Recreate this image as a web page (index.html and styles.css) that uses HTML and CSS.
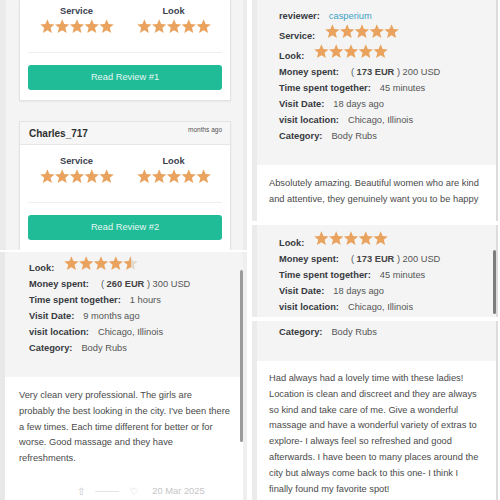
FILE: index.html
```html
<!DOCTYPE html>
<html>
<head>
<meta charset="utf-8">
<link rel="stylesheet" href="styles.css">
</head>
<body>
<svg class="defs" width="0" height="0" aria-hidden="true">
  <defs>
    <symbol id="star" viewBox="0 0 100 100">
      <polygon points="50,1 63.5,33.5 98.5,36 71.5,58.5 80.5,93.5 50,74.5 19.5,93.5 28.5,58.5 1.5,36 36.5,33.5"/>
    </symbol>
    <linearGradient id="halfFill" x1="0" x2="1" y1="0" y2="0">
      <stop offset="0.5" stop-color="#e9a35e"/>
      <stop offset="0.5" stop-color="#e3d9cb"/>
    </linearGradient>
  </defs>
</svg>

<div class="collage">
  <div class="col col-left">
    <section class="shot shot-a">
      <div class="card card-first">
        <div class="card-body">
          <div class="ratings">
            <div class="rating">
              <div class="rating-label">Service</div>
              <svg class="stars" viewBox="0 0 500 100"><use href="#star" x="0" width="100" height="100"/><use href="#star" x="100" width="100" height="100"/><use href="#star" x="200" width="100" height="100"/><use href="#star" x="300" width="100" height="100"/><use href="#star" x="400" width="100" height="100"/></svg>
            </div>
            <div class="rating">
              <div class="rating-label">Look</div>
              <svg class="stars" viewBox="0 0 500 100"><use href="#star" x="0" width="100" height="100"/><use href="#star" x="100" width="100" height="100"/><use href="#star" x="200" width="100" height="100"/><use href="#star" x="300" width="100" height="100"/><use href="#star" x="400" width="100" height="100"/></svg>
            </div>
          </div>
          <div class="divider"></div>
          <div class="btn">Read Review #1</div>
        </div>
      </div>
      <div class="card card-second">
        <div class="card-head">
          <span class="card-name">Charles_717</span>
          <span class="card-time">months ago</span>
        </div>
        <div class="card-body card-body-second">
          <div class="ratings">
            <div class="rating">
              <div class="rating-label">Service</div>
              <svg class="stars" viewBox="0 0 500 100"><use href="#star" x="0" width="100" height="100"/><use href="#star" x="100" width="100" height="100"/><use href="#star" x="200" width="100" height="100"/><use href="#star" x="300" width="100" height="100"/><use href="#star" x="400" width="100" height="100"/></svg>
            </div>
            <div class="rating">
              <div class="rating-label">Look</div>
              <svg class="stars" viewBox="0 0 500 100"><use href="#star" x="0" width="100" height="100"/><use href="#star" x="100" width="100" height="100"/><use href="#star" x="200" width="100" height="100"/><use href="#star" x="300" width="100" height="100"/><use href="#star" x="400" width="100" height="100"/></svg>
            </div>
          </div>
          <div class="divider"></div>
          <div class="btn">Read Review #2</div>
        </div>
      </div>
    </section>

    <section class="shot shot-b">
      <div class="details details-b">
        <div class="row row-stars"><span class="label">Look:</span><svg class="stars stars-inline" viewBox="0 0 500 100"><use href="#star" x="0" width="100" height="100"/><use href="#star" x="100" width="100" height="100"/><use href="#star" x="200" width="100" height="100"/><use href="#star" x="300" width="100" height="100"/><use href="#star" x="400" width="100" height="100" fill="url(#halfFill)"/></svg></div>
        <div class="row"><span class="label">Money spent:</span><span class="value value-money">( <b>260 EUR</b> ) 300 USD</span></div>
        <div class="row"><span class="label">Time spent together:</span><span class="value">1 hours</span></div>
        <div class="row"><span class="label">Visit Date:</span><span class="value">9 months ago</span></div>
        <div class="row"><span class="label">visit location:</span><span class="value">Chicago, Illinois</span></div>
        <div class="row"><span class="label">Category:</span><span class="value">Body Rubs</span></div>
      </div>
      <div class="review-text text-b">
        <p>Very clean very professional. The girls are<br>probably the best looking in the city. I've been there<br>a few times. Each time different for better or for<br>worse. Good massage and they have<br>refreshments.</p>
        <div class="review-foot">
          <span class="foot-icon">&#8679;</span>
          <span class="foot-line"></span>
          <span class="foot-icon">&#9825;</span>
          <span class="foot-date">20 Mar 2025</span>
        </div>
      </div>
      <div class="scroll-thumb thumb-b"></div>
    </section>
  </div>

  <div class="col col-right">
    <section class="shot shot-c">
      <div class="details details-c">
        <div class="row"><span class="label">reviewer:</span><span class="value value-link">casperium</span></div>
        <div class="row row-stars"><span class="label">Service:</span><svg class="stars stars-inline" viewBox="0 0 500 100"><use href="#star" x="0" width="100" height="100"/><use href="#star" x="100" width="100" height="100"/><use href="#star" x="200" width="100" height="100"/><use href="#star" x="300" width="100" height="100"/><use href="#star" x="400" width="100" height="100"/></svg></div>
        <div class="row row-stars"><span class="label">Look:</span><svg class="stars stars-inline" viewBox="0 0 500 100"><use href="#star" x="0" width="100" height="100"/><use href="#star" x="100" width="100" height="100"/><use href="#star" x="200" width="100" height="100"/><use href="#star" x="300" width="100" height="100"/><use href="#star" x="400" width="100" height="100"/></svg></div>
        <div class="row"><span class="label">Money spent:</span><span class="value value-money">( <b>173 EUR</b> ) 200 USD</span></div>
        <div class="row"><span class="label">Time spent together:</span><span class="value">45 minutes</span></div>
        <div class="row"><span class="label">Visit Date:</span><span class="value">18 days ago</span></div>
        <div class="row"><span class="label">visit location:</span><span class="value">Chicago, Illinois</span></div>
        <div class="row"><span class="label">Category:</span><span class="value">Body Rubs</span></div>
      </div>
      <div class="review-text text-c">
        <p>Absolutely amazing. Beautiful women who are kind<br>and attentive, they genuinely want you to be happy</p>
      </div>
    </section>

    <section class="shot shot-d">
      <div class="details details-d">
        <div class="row row-stars"><span class="label">Look:</span><svg class="stars stars-inline" viewBox="0 0 500 100"><use href="#star" x="0" width="100" height="100"/><use href="#star" x="100" width="100" height="100"/><use href="#star" x="200" width="100" height="100"/><use href="#star" x="300" width="100" height="100"/><use href="#star" x="400" width="100" height="100"/></svg></div>
        <div class="row"><span class="label">Money spent:</span><span class="value value-money">( <b>173 EUR</b> ) 200 USD</span></div>
        <div class="row"><span class="label">Time spent together:</span><span class="value">45 minutes</span></div>
        <div class="row"><span class="label">Visit Date:</span><span class="value">18 days ago</span></div>
        <div class="row"><span class="label">visit location:</span><span class="value">Chicago, Illinois</span></div>
      </div>
      <div class="scroll-thumb thumb-d"></div>
    </section>

    <section class="shot shot-e">
      <div class="details details-e">
        <div class="row"><span class="label">Category:</span><span class="value">Body Rubs</span></div>
      </div>
      <div class="review-text text-e">
        <p>Had always had a lovely time with these ladies!<br>Location is clean and discreet and they are always<br>so kind and take care of me. Give a wonderful<br>massage and have a wonderful variety of extras to<br>explore- I always feel so refreshed and good<br>afterwards. I have been to many places around the<br>city but always come back to this one- I think I<br>finally found my favorite spot!</p>
      </div>
    </section>
  </div>
</div>
</body>
</html>
```

FILE: styles.css
```css
* { box-sizing: border-box; }

html, body {
  margin: 0;
  padding: 0;
  background: #ffffff;
}

body {
  width: 500px;
  height: 500px;
  overflow: hidden;
  font-family: "Liberation Sans", Arial, Helvetica, sans-serif;
  font-size: 9.3px;
  color: #333;
}

.defs { position: absolute; width: 0; height: 0; }

.collage {
  display: flex;
  gap: 5px;
  width: 500px;
  height: 500px;
}

.col {
  display: flex;
  flex-direction: column;
}

.col-left { width: 247px; gap: 2px; }
.col-right { width: 248px; gap: 4px; padding-right: 2px; }

.shot {
  position: relative;
  overflow: hidden;
  background: #f4f4f4;
}

/* ---------- panel A : list of review cards ---------- */
.shot-a {
  height: 250px;
  border-left: 6px solid #ebebeb;
  border-right: 4px solid #ececec;
  padding: 0 12px 0 13px;
}

.card {
  background: #fff;
  border: 1px solid #e3e3e3;
  box-shadow: 0 1px 2px rgba(0,0,0,0.05);
}

.card-first { border-top: none; }
.card-second { margin-top: 20px; }

.card-body { padding: 4px 8px 10px; }
.card-body-second { padding-top: 9px; }

.ratings {
  display: grid;
  grid-template-columns: 1fr 1fr;
  text-align: center;
}

.rating-label {
  font-weight: bold;
  line-height: 14px;
  color: #3c4351;
}

.stars {
  display: block;
  width: 74px;
  height: 15px;
  fill: #e9a35e;
}

.rating .stars { margin: 1px auto 0; }

.divider {
  height: 1px;
  background: #efefef;
  margin-top: 18px;
}

.btn {
  margin-top: 12px;
  height: 25px;
  line-height: 25px;
  border-radius: 3px;
  background: #20bc98;
  color: #e4f7f1;
  text-align: center;
}

.card-head {
  display: flex;
  justify-content: space-between;
  align-items: center;
  height: 23px;
  padding: 0 8px 0 9px;
  background: #f6f6f6;
  border-bottom: 1px solid #e6e6e6;
}

.card-name {
  font-size: 10px;
  font-weight: bold;
  color: #2f2f2f;
}

.card-time {
  align-self: flex-start;
  margin-top: 4px;
  font-size: 6.5px;
  color: #555;
}

/* ---------- detail rows ---------- */
.details { background: #f4f4f4; }

.row {
  display: flex;
  align-items: flex-end;
  line-height: 16px;
  white-space: nowrap;
}

.label {
  font-weight: bold;
  color: #373a3f;
}

.value {
  margin-left: 9px;
  color: #555;
}

.value b { color: #444; }

.value-money { margin-left: 12px; }

.value-link { color: #3c9fc6; }

.stars-inline {
  margin-left: 10px;
  margin-bottom: 5px;
}

.review-text {
  background: #fff;
  color: #4a4a4a;
  line-height: 15.8px;
}

.review-text p {
  margin: 0;
  white-space: nowrap;
}

/* ---------- panel B ---------- */
.shot-b {
  flex: 1;
  border-left: 5px solid #e8e8e8;
  border-right: 4px solid #efefef;
}

.details-b { padding: 4px 0 21px 24px; }

.text-b {
  height: 200px;
  padding: 11px 6px 0 14px;
}

.review-foot {
  display: flex;
  align-items: center;
  gap: 10px;
  margin-top: 19px;
  padding-left: 58px;
  line-height: 11px;
  color: #c6c6c6;
}

.foot-icon { font-family: "DejaVu Sans", sans-serif; font-size: 10px; }
.foot-line { width: 24px; height: 1px; background: #e4e4e4; }
.foot-date { margin-left: 4px; }

.scroll-thumb {
  position: absolute;
  width: 3px;
  border-radius: 2px;
  background: #8c8c8c;
}

.thumb-b { right: 0; top: 18px; height: 172px; background: #9a9a9a; }

/* ---------- panel C ---------- */
.shot-c {
  height: 221px;
  border-left: 5px solid #ebebeb;
  border-right: 2px solid #dcdcdc;
}

.details-c { padding: 8px 0 21px 22px; }

.text-c {
  height: 60px;
  padding: 11px 12px 0 12px;
}

/* ---------- panel D ---------- */
.shot-d {
  height: 92px;
  border-left: 5px solid #ebebeb;
  border-right: 2px solid #dcdcdc;
}

.details-d { padding: 6px 0 0 22px; }

.thumb-d { right: 0; top: 25px; height: 64px; background: #7d7d7d; }

/* ---------- panel E ---------- */
.shot-e {
  flex: 1;
  border-left: 5px solid #ebebeb;
  border-right: 2px solid #dcdcdc;
}

.details-e { padding: 3px 0 21px 22px; }

.text-e {
  height: 200px;
  padding: 10px 12px 0 12px;
}
```
